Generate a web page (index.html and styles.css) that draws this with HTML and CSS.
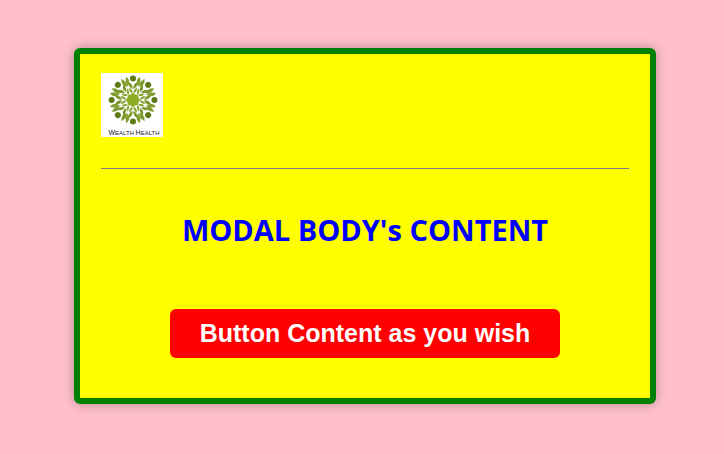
FILE: index.html
```
<!DOCTYPE html>
<html lang="en">
<head>
<meta charset="utf-8">
<title>Modal</title>
<link rel="stylesheet" href="styles.css">
</head>
<body>
<div class="modal" role="dialog" aria-labelledby="modal-title">
  <header class="modal-header">
    <svg class="logo" viewBox="0 0 62 64" role="img" aria-label="Wealth Health">
      <defs>
        <g id="petal">
          <circle cx="0" cy="-21.4" r="3" fill="#5b7a14"/>
          <path d="M-.4-11Q-5-13-4.4-18Q.2-16-.4-11ZM.4-11Q5-13 4.4-18Q-.2-16 .4-11Z" fill="#789626"/>
          <path d="M-.3-6.5Q-4.2-8-4-12.5Q0-10.5-.3-6.5ZM.3-6.5Q4.2-8 4-12.5Q0-10.5 .3-6.5Z" fill="#8aa638"/>
        </g>
        <path id="leaf" d="M-.3-14.5Q-6-18-2.6-24Q1.4-19-.3-14.5ZM.3-14.5Q6-18 2.6-24Q-1.4-19 .3-14.5Z" fill="#809d30"/>
      </defs>
      <rect width="62" height="64" fill="#fff"/>
      <g transform="translate(32 27)">
        <use href="#leaf" transform="rotate(22.5)"/>
        <use href="#leaf" transform="rotate(67.5)"/>
        <use href="#leaf" transform="rotate(112.5)"/>
        <use href="#leaf" transform="rotate(157.5)"/>
        <use href="#leaf" transform="rotate(202.5)"/>
        <use href="#leaf" transform="rotate(247.5)"/>
        <use href="#leaf" transform="rotate(292.5)"/>
        <use href="#leaf" transform="rotate(337.5)"/>
        <use href="#petal"/>
        <use href="#petal" transform="rotate(45)"/>
        <use href="#petal" transform="rotate(90)"/>
        <use href="#petal" transform="rotate(135)"/>
        <use href="#petal" transform="rotate(180)"/>
        <use href="#petal" transform="rotate(225)"/>
        <use href="#petal" transform="rotate(270)"/>
        <use href="#petal" transform="rotate(315)"/>
        <path d="M0-7.5L2.4-5.8 5.3-5.3 5.8-2.4 7.5 0 5.8 2.4 5.3 5.3 2.4 5.8 0 7.5-2.4 5.8-5.3 5.3-5.8 2.4-7.5 0-5.8-2.4-5.3-5.3-2.4-5.8Z" fill="#8fad22" stroke="#fff" stroke-width=".5"/>
      </g>
      <text class="logo-name" x="33" y="62" text-anchor="middle"><tspan class="logo-initial">W</tspan>EALTH <tspan class="logo-initial">H</tspan>EALTH</text>
    </svg>
  </header>
  <div class="modal-body">
    <h1 class="modal-title" id="modal-title">MODAL BODY's CONTENT</h1>
  </div>
  <footer class="modal-footer">
    <button class="modal-button" type="button">Button Content as you wish</button>
  </footer>
</div>
</body>
</html>
```
FILE: styles.css
```
* {
  box-sizing: border-box;
}

body {
  margin: 0;
  padding: 48px 68px 48px 74px;
  background: pink;
  font-family: "Open Sans", "Noto Sans", sans-serif;
}

.modal {
  padding: 19px 21px 40px;
  border: 6px solid green;
  border-radius: 6px;
  background: yellow;
  box-shadow: 0 0 12px rgba(0, 0, 0, 0.3);
}

.modal-header {
  padding-bottom: 31px;
  border-bottom: 1px solid gray;
}

.logo {
  display: block;
  width: 62px;
  height: 64px;
}

.logo-name {
  fill: #222;
  font-family: "Liberation Sans", Arial, sans-serif;
  font-size: 6px;
  font-weight: 400;
}

.logo-initial {
  font-size: 7px;
}

.modal-body {
  padding: 41px 0 59px;
}

.modal-title {
  margin: 0;
  color: blue;
  font-size: 29px;
  font-weight: 700;
  line-height: 40px;
  text-align: center;
}

.modal-footer {
  display: flex;
  justify-content: center;
}

.modal-button {
  padding: 9px 30px 10px;
  border: 0;
  border-radius: 6px;
  background: red;
  color: white;
  font-family: "Liberation Sans", Arial, sans-serif;
  font-size: 25px;
  font-weight: 700;
  line-height: 30px;
}
```
